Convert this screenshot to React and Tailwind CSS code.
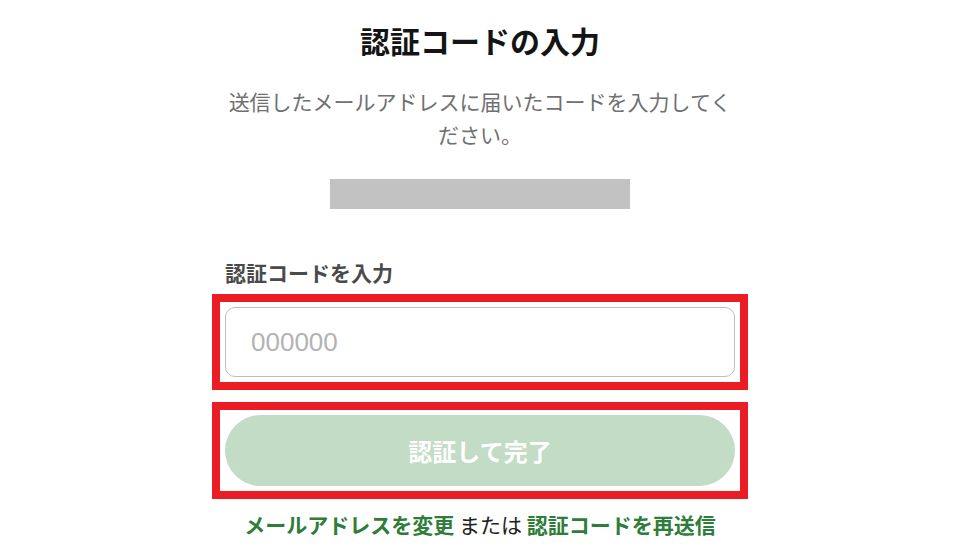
const jp = "font-['Noto_Sans_CJK_JP',sans-serif]";

export default function App() {
  return (
    <div className={`min-h-screen w-full bg-white flex justify-center pr-[9px] ${jp}`}>
      <div className="w-[536px] flex flex-col items-center pt-[20px]">
        <h1 className="text-[30px] leading-[40px] font-bold text-[#141414]">認証コードの入力</h1>

        <p className="mt-[25px] w-[510px] text-center text-[21px] leading-[33px] text-[#707070]">
          送信したメールアドレスに届いたコードを入力してください。
        </p>

        {/* masked email */}
        <div className="mt-[28px] w-[300px] h-[30px] bg-[#c2c2c2]" />

        <div className="mt-[48px] w-full">
          <label className="block pl-[13px] text-[21px] leading-[30px] font-bold text-[#4a4a4a]">
            認証コードを入力
          </label>

          <div className="mt-[7px] border-[8px] border-[#ec1c24] p-[5px]">
            <input
              type="text"
              placeholder="000000"
              className="block w-full h-[70px] rounded-[10px] border border-[#bdbdbd] px-[25px] text-[26px] font-['Liberation_Sans',sans-serif] text-[#333] placeholder:text-[#b3b3b3] outline-none"
            />
          </div>

          <div className="mt-[12px] border-[8px] border-[#ec1c24] p-[5px]">
            <button
              type="button"
              className="block w-full h-[71px] rounded-full bg-[#c2dcc6] text-white text-[24px] font-bold"
            >
              認証して完了
            </button>
          </div>
        </div>

        <p className="mt-[10px] text-[21px] leading-[30px] text-[#222]">
          <a href="#" className="font-bold text-[#2e7d38]">メールアドレスを変更</a>
          {" "}または{" "}
          <a href="#" className="font-bold text-[#2e7d38]">認証コードを再送信</a>
        </p>
      </div>
    </div>
  );
}
